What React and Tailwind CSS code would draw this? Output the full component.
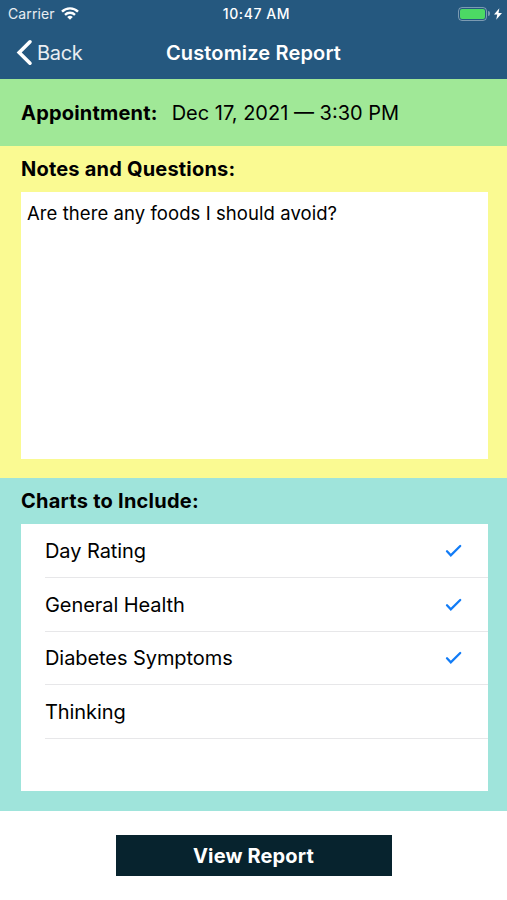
const charts = [
  { name: 'Day Rating', included: true },
  { name: 'General Health', included: true },
  { name: 'Diabetes Symptoms', included: true },
  { name: 'Thinking', included: false },
]

function StatusBar() {
  return (
    <div className="grid h-[27px] grid-cols-3 items-center pl-2 pr-[5px] text-white">
      <div className="flex items-center gap-[6px]">
        <span className="text-[14px] tracking-[0.1px] text-white/90">Carrier</span>
        <svg className="h-[13px] w-[18px]" viewBox="0 0 18 13" fill="none" stroke="currentColor" strokeWidth="2.4">
          <path d="M1 4.7C5.4 .3 12.6 .3 17 4.7M4 7.8C6.8 5.1 11.2 5.1 14 7.8" />
          <path d="M9 12.8 6.2 10Q9 7.6 11.8 10Z" fill="currentColor" stroke="none" />
        </svg>
      </div>
      <span className="pl-[3px] text-center text-[14px] font-medium tracking-[0.6px]">10:47 AM</span>
      <div className="flex items-center justify-end">
        <div className="h-[14px] w-[29px] rounded-[4px] border border-white/40 p-px">
          <div className="h-full rounded-[2px] bg-[#4cd964]" />
        </div>
        <div className="ml-px h-[5px] w-[2px] rounded-r bg-white/40" />
        <svg className="ml-[4px] h-[12px] w-[8px]" viewBox="0 0 9 13" fill="currentColor">
          <path d="M6 0 0 7.2h3.7L2.5 13 9 5.4H5.1Z" />
        </svg>
      </div>
    </div>
  )
}

export default function App() {
  return (
    <div className="flex h-[900px] w-[507px] flex-col bg-white font-['Inter','Liberation_Sans',sans-serif] text-black">
      <header className="h-[79px] bg-[#25587f]">
        <StatusBar />
        <nav className="grid h-[51px] grid-cols-[1fr_auto_1fr] items-center px-4 text-white">
          <button className="flex items-center gap-[4px] text-left text-[20px] tracking-[-0.3px] text-white/90">
            <svg
              className="h-[27px] w-[17px]"
              viewBox="0 0 17 27"
              fill="none"
              stroke="white"
              strokeWidth="3.6"
              strokeLinecap="round"
            >
              <path d="M14 2.8 3.2 13.5 14 24.2" />
            </svg>
            Back
          </button>
          <h1 className="text-[20px] font-semibold tracking-[0.15px]">Customize Report</h1>
        </nav>
      </header>

      <section className="flex h-[67px] items-center gap-[14px] bg-[#a0e897] pl-[21px] text-[20px]">
        <h2 className="font-bold tracking-[0.2px]">Appointment:</h2>
        <span>Dec 17, 2021 — 3:30 PM</span>
      </section>

      <section className="h-[332px] bg-[#fafa92] pl-[21px] pr-[19px] pt-2">
        <h2 className="h-[38px] text-[20px] font-bold leading-[30px] tracking-[0.2px]">Notes and Questions:</h2>
        <div className="h-[267px] bg-white px-1.5 pt-2 text-[18.5px] leading-[27px] tracking-[0.07px]">
          Are there any foods I should avoid?
        </div>
      </section>

      <section className="h-[333px] bg-[#9fe4db] pl-[21px] pr-[19px] pt-2">
        <h2 className="h-[38px] text-[20px] font-bold leading-[30px] tracking-[0.24px]">Charts to Include:</h2>
        <ul className="h-[267px] bg-white">
          {charts.map(chart => (
            <li
              key={chart.name}
              className="ml-6 flex h-[53.8px] items-center justify-between border-b border-[#e7e7e9] pr-[26px] pt-px text-[20px] tracking-[-0.07px]"
            >
              {chart.name}
              {chart.included && (
                <svg
                  className="h-[14px] w-[17px]"
                  viewBox="0 0 17 14"
                  fill="none"
                  stroke="#127cf6"
                  strokeWidth="2.3"
                  strokeLinecap="round"
                >
                  <path d="m2 7.3 3.8 4L15.2 2" />
                </svg>
              )}
            </li>
          ))}
        </ul>
      </section>

      <footer className="flex justify-center pt-6">
        <button className="h-[41px] w-[276px] bg-[#07232e] text-[20px] font-bold tracking-[0.15px] text-white">
          View Report
        </button>
      </footer>
    </div>
  )
}
